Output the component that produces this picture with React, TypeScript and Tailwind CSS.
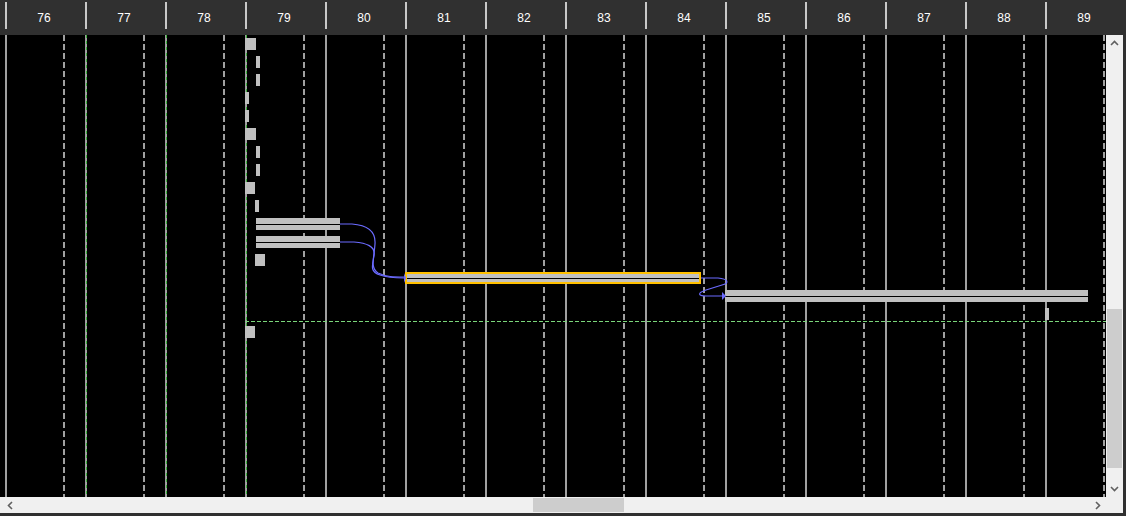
import React from "react";

/* ─── Data ─── */

const weeks = [76, 77, 78, 79, 80, 81, 82, 83, 84, 85, 86, 87, 88, 89];
const greenCols = [77, 78, 79];

type Bar = { x: number; y: number; w: number; kind?: "split" | "selected" };

// page coords; chart canvas starts at y=35
const bars: Bar[] = [
  { x: 245, y: 38, w: 11 },
  { x: 256, y: 56, w: 4 },
  { x: 256, y: 74, w: 4 },
  { x: 245, y: 92, w: 4 },
  { x: 245, y: 110, w: 4 },
  { x: 245, y: 128, w: 11 },
  { x: 256, y: 146, w: 4 },
  { x: 256, y: 164, w: 4 },
  { x: 245, y: 182, w: 10 },
  { x: 255, y: 200, w: 4 },
  { x: 256, y: 218, w: 84, kind: "split" },
  { x: 256, y: 236, w: 84, kind: "split" },
  { x: 255, y: 254, w: 10 },
  { x: 405, y: 272, w: 296, kind: "selected" },
  { x: 725, y: 290, w: 363, kind: "split" },
  { x: 1045, y: 308, w: 4 },
  { x: 245, y: 326, w: 10 },
];

/* ─── Pieces ─── */

function GanttBar({ bar }: { bar: Bar }) {
  const style = { left: bar.x, top: bar.y - 35, width: bar.w };
  if (bar.kind === "split") {
    return (
      <div className="absolute flex flex-col h-[12px]" style={style}>
        <div className="h-[6px] bg-[#c0c0c0]" />
        <div className="h-px bg-black" />
        <div className="h-[5px] bg-[#c0c0c0]" />
      </div>
    );
  }
  if (bar.kind === "selected") {
    return (
      <div className="absolute flex flex-col h-[12px] border-2 border-[#ffc000]" style={style}>
        <div className="h-[4px] bg-[#c0c0c0]" />
        <div className="h-px bg-black" />
        <div className="h-[3px] bg-[#c0c0c0]" />
      </div>
    );
  }
  return <div className="absolute h-[12px] bg-[#c0c0c0]" style={style} />;
}

function Chevron({ dir }: { dir: "up" | "down" | "left" | "right" }) {
  const d = {
    up: "M1 6 L4.5 2.5 L8 6",
    down: "M1 3 L4.5 6.5 L8 3",
    left: "M6 1 L2.5 4.5 L6 8",
    right: "M3 1 L6.5 4.5 L3 8",
  }[dir];
  return (
    <svg width="9" height="9" viewBox="0 0 9 9">
      <path d={d} fill="none" stroke="#606060" strokeWidth="1.6" />
    </svg>
  );
}

/* ─── Component ─── */

export default function App() {
  return (
    <div
      className="w-[1126px] h-[516px] bg-[#303030] flex flex-col overflow-hidden"
      style={{ fontFamily: '"Liberation Sans", Arial, sans-serif' }}
    >
      {/* ─── Header ─── */}
      <div className="h-[35px] flex pl-[5px] bg-[#303030] shrink-0">
        {weeks.map((w) => (
          <div key={w} className="relative w-[80px] shrink-0 flex items-center justify-center">
            <div className="absolute left-0 top-[2px] h-[27px] w-[2px] bg-[#c8c8c8]" />
            <span className="text-[12px] text-white pr-[2px]">{w}</span>
          </div>
        ))}
      </div>

      {/* ─── Body ─── */}
      <div className="flex h-[462px] shrink-0">
        <div className="relative w-[1106px] bg-black overflow-hidden">
          <div className="flex h-full pl-[5px]">
            {weeks.map((w) => (
              <div key={w} className="relative w-[80px] shrink-0 h-full">
                <div className="absolute left-0 top-0 h-full w-[2px] bg-[#a0a0a0]" />
                {greenCols.includes(w) && (
                  <div className="absolute left-px top-0 h-full w-px bg-[repeating-linear-gradient(to_bottom,#3cb43c_0_3px,transparent_3px_6px)]" />
                )}
                <div className="absolute left-[58px] top-0 h-full w-[2px] bg-[repeating-linear-gradient(to_bottom,#a0a0a0_0_6px,transparent_6px_9px)]" />
              </div>
            ))}
          </div>

          {/* status line */}
          <div className="absolute left-[245px] right-0 top-[286px] h-px bg-[repeating-linear-gradient(to_right,#7ad67a_0_4px,transparent_4px_6px)]" />

          {bars.map((b, i) => (
            <GanttBar key={i} bar={b} />
          ))}

          {/* dependency links */}
          <svg className="absolute left-0 top-0" width="1106" height="462" viewBox="0 35 1106 462">
            <g fill="none" stroke="#6b6bff" strokeWidth="1.2">
              <path d="M340 224 L352 224 C366 225, 376 230, 375 244 C374 258, 370 268, 378 273 C386 277, 394 277, 404 277" />
              <path d="M340 242 L354 242 C366 243, 376 246, 374 256 C372 266, 370 272, 380 275 C388 278, 396 278, 404 278" />
              <path d="M701 278 L718 278 C728 279, 730 283, 722 285 L706 290 C697 293, 698 296, 706 296 L724 296" />
            </g>
            <path d="M404 273 L406 278 L404 283 Z" fill="#6b6bff" />
            <path d="M722 292 L726 296 L722 300 Z" fill="#6b6bff" />
          </svg>
        </div>

        {/* vertical scrollbar */}
        <div className="w-[17px] bg-[#f0f0f0] flex flex-col">
          <div className="h-[17px] flex items-center justify-center">
            <Chevron dir="up" />
          </div>
          <div className="flex-1 flex flex-col pt-[257px] pb-[12px] px-[1px]">
            <div className="flex-1 bg-[#cdcdcd]" />
          </div>
          <div className="h-[17px] flex items-center justify-center">
            <Chevron dir="down" />
          </div>
        </div>
        <div className="w-[3px] bg-[#303030]" />
      </div>

      {/* ─── Horizontal scrollbar ─── */}
      <div className="flex h-[16px] shrink-0">
        <div className="w-[1106px] bg-[#f0f0f0] flex items-center">
          <div className="w-[17px] flex items-center justify-center pl-[4px]">
            <Chevron dir="left" />
          </div>
          <div className="flex-1 h-full flex items-center">
            <div className="ml-[516px] w-[91px] h-[14px] bg-[#cdcdcd]" />
          </div>
          <div className="w-[17px] flex items-center justify-center">
            <Chevron dir="right" />
          </div>
        </div>
        <div className="w-[17px] bg-[#f0f0f0]" />
        <div className="w-[3px] bg-[#303030]" />
      </div>
      <div className="h-[3px] bg-[#303030]" />
    </div>
  );
}
